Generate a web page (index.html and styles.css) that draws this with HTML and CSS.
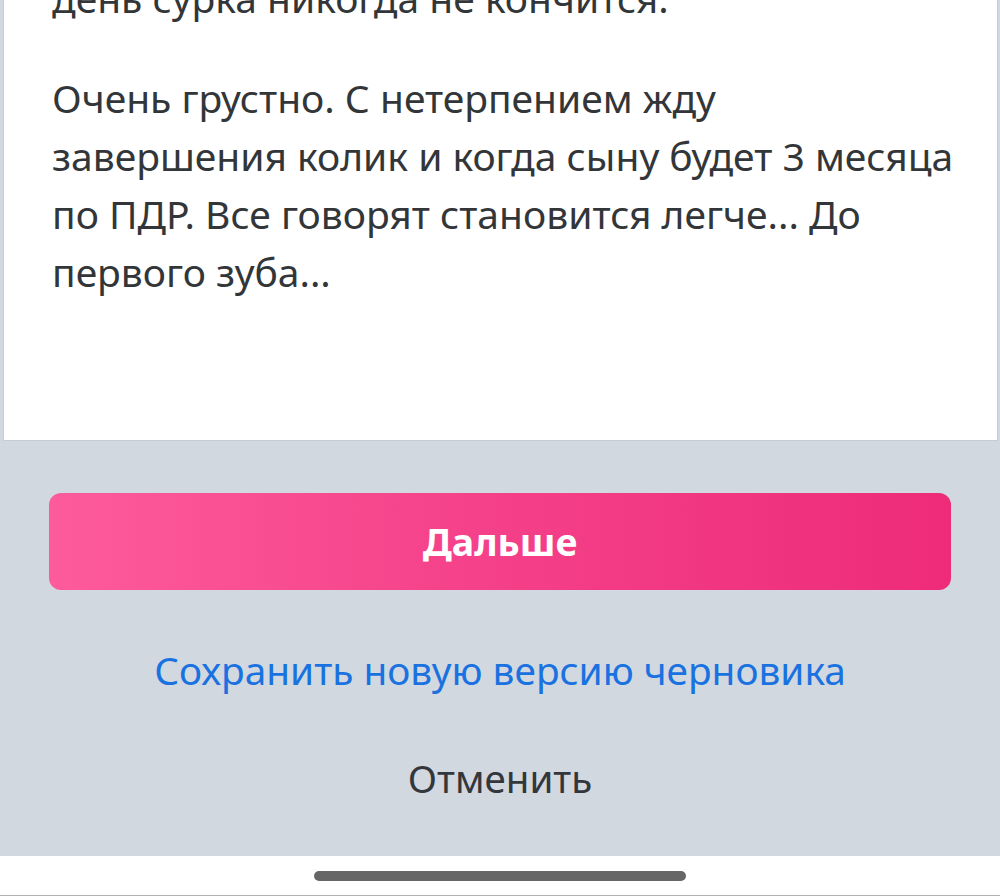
FILE: index.html
```html
<!DOCTYPE html>
<html lang="ru">
<head>
<meta charset="utf-8">
<link rel="stylesheet" href="styles.css">
</head>
<body>
<div class="screen">
  <div class="card">
    <p class="para">день сурка никогда не кончится.</p>
    <p class="para">Очень грустно. С нетерпением жду<br>завершения колик и когда сыну будет 3 месяца<br>по ПДР. Все говорят становится легче... До<br>первого зуба...</p>
  </div>
  <div class="actions">
    <button class="btn-primary">Дальше</button>
    <a class="link-save">Сохранить новую версию черновика</a>
    <a class="link-cancel">Отменить</a>
  </div>
</div>
<div class="navbar"><div class="home-indicator"></div></div>
</body>
</html>
```

FILE: styles.css
```css
html, body {
  margin: 0;
  padding: 0;
  height: 896px;
  overflow: hidden;
  background: #d1d8e0;
  font-family: "Noto Sans", sans-serif;
}
.screen {
  height: 856px;
  display: flex;
  flex-direction: column;
  overflow: hidden;
}
.card {
  margin: -31px 2px 0 3px;
  background: #fff;
  border: 1px solid #c5ccd3;
  border-top: none;
  padding: 0 20px 139px 48px;
  color: #333639;
  white-space: nowrap;
}
.para {
  margin: 0;
  font-size: 39px;
  line-height: 58px;
}
.para + .para {
  margin-top: 42px;
}
.actions {
  display: flex;
  flex-direction: column;
  align-items: center;
  padding-top: 52px;
}
.btn-primary {
  width: 902px;
  height: 97px;
  border: none;
  border-radius: 12px;
  background: linear-gradient(90deg, #fd5b9c 0%, #f5428a 45%, #ee2b79 100%);
  color: #fff;
  font-family: "Noto Sans", sans-serif;
  font-weight: 700;
  font-size: 37.5px;
}
.link-save {
  margin-top: 56px;
  color: #1a72e0;
  font-size: 38.8px;
  line-height: 48px;
}
.link-cancel {
  margin-top: 60px;
  color: #33373c;
  font-size: 38.5px;
  line-height: 48px;
}
.navbar {
  height: 39px;
  background: #fff;
  border-bottom: 1px solid #b0b0b0;
  display: flex;
  justify-content: center;
  align-items: center;
}
.home-indicator {
  width: 372px;
  height: 10px;
  border-radius: 5px;
  background: #666;
}
```
